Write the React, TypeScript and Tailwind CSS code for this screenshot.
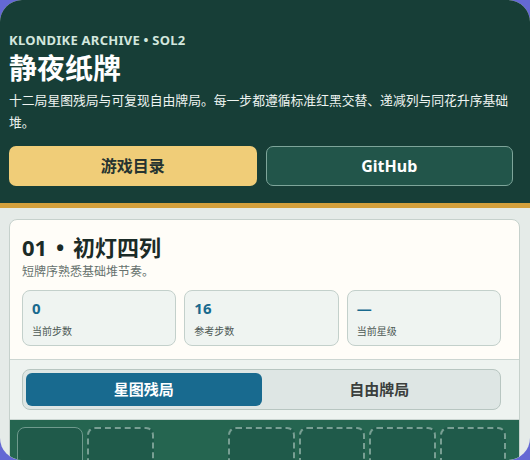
import React from 'react';

const stats = [
  { value: '0', label: '当前步数' },
  { value: '16', label: '参考步数' },
  { value: '—', label: '当前星级' },
];

// foundation / stock slots along the top of the felt
const slots = ['solid', 'dashed', 'none', 'dashed', 'dashed', 'dashed', 'dashed'];

const App = () => {
  return (
    <div className="min-h-screen bg-[#6468d4] font-['Noto_Sans','Noto_Sans_CJK_SC',sans-serif]">
      <div className="h-[460px] overflow-hidden rounded-[22px] bg-[#e5ebe8]">
        <header className="bg-[#173e37] border-b-[5px] border-[#d4a03c] pl-[9px] pr-[17px] pt-[31px] pb-[17px]">
          <p className="text-[13px] leading-[18px] font-bold tracking-[0.25px] text-[#d3e7de]">
            KLONDIKE ARCHIVE • SOL2
          </p>
          <h1 className="mt-[1px] text-[28px] leading-[36px] font-bold text-white">静夜纸牌</h1>
          <p className="mt-[3px] text-[12.8px] leading-[22px] text-[#eef4f1]">
            十二局星图残局与可复现自由牌局。每一步都遵循标准红黑交替、递减列与同花升序基础堆。
          </p>
          <div className="mt-[13px] grid grid-cols-2 gap-[9px]">
            <button
              type="button"
              className="h-[40px] rounded-[7px] bg-[#f0cd78] text-[16px] font-bold text-[#263330]"
            >
              游戏目录
            </button>
            <button
              type="button"
              className="h-[40px] rounded-[7px] border border-[#7ea59a] bg-[#22554a] text-[16px] font-bold text-white"
            >
              GitHub
            </button>
          </div>
        </header>

        <main className="pt-[11px] pl-[9px] pr-[10px]">
          <section className="overflow-hidden rounded-[8px] border border-[#c6d1cc] bg-[#fffdf8]">
            <div className="pl-[12px] pr-[18px] pt-[12px] pb-[13px]">
              <h2 className="text-[22px] leading-[30px] font-bold text-[#1b2b27]">
                01 <span className="px-[3px]">•</span> 初灯四列
              </h2>
              <p className="mt-[1px] text-[12px] leading-[18px] text-[#66716d]">短牌序熟悉基础堆节奏。</p>
              <div className="mt-[9px] grid grid-cols-3 gap-[8px]">
                {stats.map((s) => (
                  <div
                    key={s.label}
                    className="rounded-[8px] border border-[#c3d0cb] bg-[#eff4f1] pl-[9px] pt-[7px] pb-[7px]"
                  >
                    <div className="text-[15px] leading-[20px] font-bold text-[#196a8e]">{s.value}</div>
                    <div className="mt-[6px] text-[10px] leading-[14px] text-[#4d5955]">{s.label}</div>
                  </div>
                ))}
              </div>
            </div>

            <div className="border-t border-[#ccd6d2] bg-[#eef3f0] pl-[12px] pr-[18px] pt-[9px] pb-[9px]">
              <div className="grid grid-cols-2 rounded-[8px] border border-[#b8c6c1] bg-[#dee6e4] p-[3px]">
                <button
                  type="button"
                  className="h-[33px] rounded-[6px] bg-[#186a8f] text-[15px] font-bold text-white"
                >
                  星图残局
                </button>
                <button type="button" className="h-[33px] text-[15px] font-bold text-[#3b3f3d]">
                  自由牌局
                </button>
              </div>
            </div>

            <div className="border-t border-[#ccd6d2] bg-[#256550] pl-[7px] pr-[13px] pt-[7px] pb-[20px]">
              <div className="grid grid-cols-7 gap-[4px]">
                {slots.map((kind, i) =>
                  kind === 'none' ? (
                    <div key={i} className="h-[92px]" />
                  ) : kind === 'solid' ? (
                    <div key={i} className="h-[92px] rounded-[8px] border-[1.5px] border-[#6f9a8d] bg-[#1f5a4a]" />
                  ) : (
                    <div
                      key={i}
                      className="h-[92px] rounded-[8px] border-2 border-dashed border-[#789f93] bg-[#1f5a4a]"
                    />
                  ),
                )}
              </div>
            </div>
          </section>
        </main>
      </div>
    </div>
  );
};

export default App;
